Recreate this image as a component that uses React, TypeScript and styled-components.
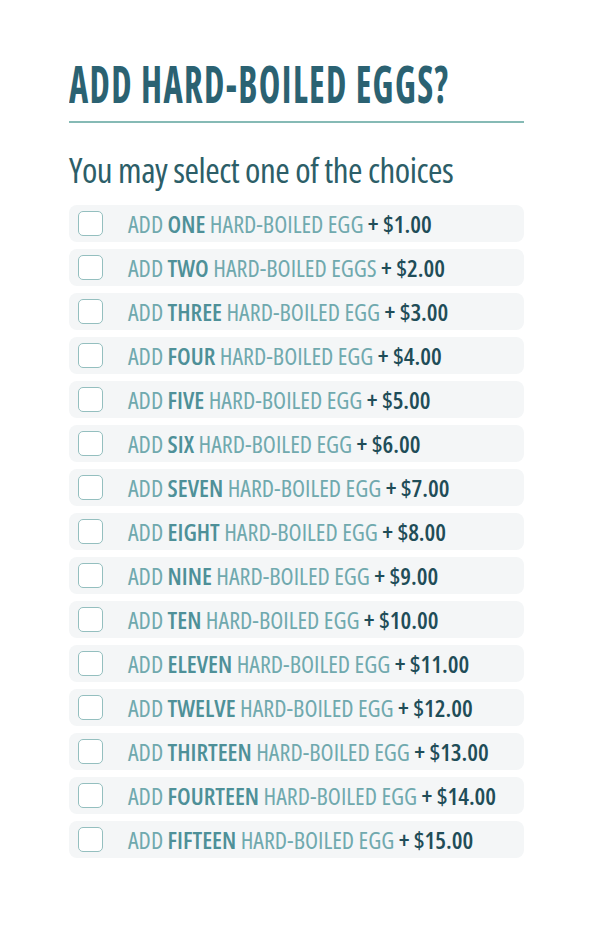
import styled, { createGlobalStyle } from "styled-components"

const GlobalStyle = createGlobalStyle`
  body {
    margin: 0;
    background: #ffffff;
    font-family: "Open Sans", "Roboto Condensed", sans-serif;
    font-stretch: condensed;
  }
`

type Option = { count: string; plural?: boolean; price: number }

const options: Option[] = [
  { count: "ONE", price: 1 },
  { count: "TWO", plural: true, price: 2 },
  { count: "THREE", price: 3 },
  { count: "FOUR", price: 4 },
  { count: "FIVE", price: 5 },
  { count: "SIX", price: 6 },
  { count: "SEVEN", price: 7 },
  { count: "EIGHT", price: 8 },
  { count: "NINE", price: 9 },
  { count: "TEN", price: 10 },
  { count: "ELEVEN", price: 11 },
  { count: "TWELVE", price: 12 },
  { count: "THIRTEEN", price: 13 },
  { count: "FOURTEEN", price: 14 },
  { count: "FIFTEEN", price: 15 },
]

export default function App() {
  return (
    <Page>
      <GlobalStyle />
      <Title>ADD HARD-BOILED EGGS?</Title>
      <Divider />
      <Subtitle>You may select one of the choices</Subtitle>
      <List>
        {options.map((o) => (
          <Row key={o.count}>
            <Checkbox type="checkbox" />
            <Label>
              ADD <Count>{o.count}</Count> HARD-BOILED EGG{o.plural ? "S" : ""}{" "}
              <Price>+ ${o.price.toFixed(2)}</Price>
            </Label>
          </Row>
        ))}
      </List>
    </Page>
  )
}

const Page = styled.div`
  width: 455px;
  padding: 57px 0 0 69px;
`

// the condensed face is still wider than the original, so squeeze it a bit
const Title = styled.h1`
  display: inline-block;
  margin: 0;
  font-size: 52px;
  line-height: 52px;
  font-weight: 700;
  letter-spacing: 2px;
  color: #2b6272;
  white-space: nowrap;
  transform: scaleX(0.7);
  transform-origin: left center;
`

const Divider = styled.div`
  height: 2px;
  background: #86bab5;
  margin-top: 12px;
`

const Subtitle = styled.p`
  margin: 25px 0 0;
  font-size: 35px;
  line-height: 44px;
  font-weight: 400;
  letter-spacing: -0.5px;
  color: #2c5e68;
`

const List = styled.div`
  display: flex;
  flex-direction: column;
  gap: 7px;
  margin-top: 13px;
`

const Row = styled.label`
  display: flex;
  align-items: center;
  height: 37px;
  padding-left: 9px;
  border-radius: 8px;
  background: #f4f6f7;
`

const Checkbox = styled.input`
  appearance: none;
  flex: none;
  margin: 0;
  width: 25px;
  height: 25px;
  box-sizing: border-box;
  border: 1.5px solid #94bfbf;
  border-radius: 5px;
  background: #ffffff;
`

const Label = styled.span`
  margin-left: 25px;
  font-size: 24px;
  font-weight: 400;
  color: #70a9ae;
  white-space: nowrap;
`

const Count = styled.span`
  font-weight: 600;
  color: #4e9098;
`

const Price = styled.span`
  font-weight: 600;
  color: #1f4d58;
`
